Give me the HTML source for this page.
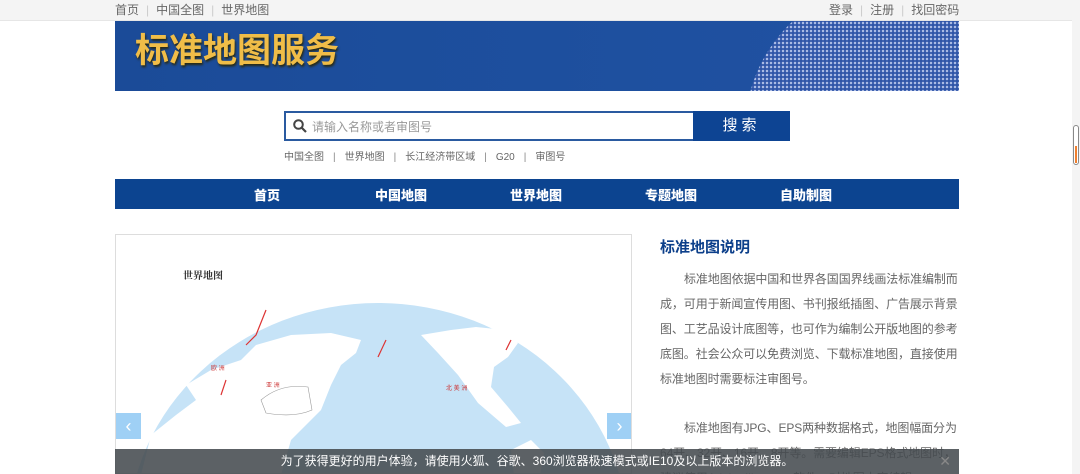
<!DOCTYPE html>
<html><head><meta charset="utf-8"><style>
*{margin:0;padding:0;box-sizing:border-box}
html,body{width:1080px;height:474px;overflow:hidden}
body{background:#fff;font-family:"Liberation Sans","Noto Sans CJK SC",sans-serif;position:relative}
.top{position:absolute;left:0;top:0;width:1072px;height:21px;background:#f4f4f4;border-bottom:1px solid #e6e6e6;font-size:12px;color:#666;line-height:21px}
.top .l{position:absolute;left:115px}
.top .r{position:absolute;left:829px}
.sep{color:#ccc;margin:0 7px}
.banner{position:absolute;left:115px;top:21px;width:844px;height:70px;background:linear-gradient(90deg,#1b4b98,#1d4f9e 50%,#2152a3);overflow:hidden}
.banner .t{position:absolute;left:20px;top:2px;font-size:34px;font-weight:bold;color:#f0bd48;text-shadow:1px 2px 2px #2a2a10}
.globe{position:absolute;left:630px;top:-40px;width:300px;height:300px;border-radius:50%;background:radial-gradient(circle,rgba(205,215,245,.8) 1px,transparent 1.5px) 0 0/4px 4px,#2f55a8}
.search{position:absolute;left:284px;top:111px;width:506px;height:30px;border:2px solid #2a5aa0;background:#fff}
.search .ph{position:absolute;left:26px;top:5px;font-size:12px;color:#999}
.search .btn{position:absolute;right:-2px;top:-2px;width:97px;height:30px;background:#0d4493;color:#fff;font-size:15px;text-align:center;line-height:30px;letter-spacing:4px}
.links{position:absolute;left:284px;top:148px;font-size:10px;color:#666}
.links span{margin:0 9px;color:#888}
.nav{position:absolute;left:115px;top:179px;width:844px;height:30px;background:#0c4490;color:#fff;font-size:13px;font-weight:bold}
.nav b{position:absolute;top:6px}
.car{position:absolute;left:115px;top:234px;width:517px;height:240px;border:1px solid #ddd;overflow:hidden;background:#fff}
.car .mt{position:absolute;left:67px;top:32px;font-size:10px;font-weight:bold;color:#333;font-family:"Liberation Serif","Noto Serif CJK SC",serif}
.arrow{position:absolute;top:178px;width:25px;height:26px;background:#9fd0f5;color:#fff;font-size:18px;text-align:center;line-height:26px}
.right{position:absolute;left:660px;top:236px;width:298px}
.right h2{font-size:15px;color:#0c3f8a;font-weight:bold;margin-bottom:10px}
.right p{font-size:12px;color:#666;line-height:25px;text-indent:24px;margin-bottom:24px;letter-spacing:-.1px}
.notice{position:absolute;left:115px;top:449px;width:844px;height:25px;background:rgba(70,75,80,.88);color:#fff;font-size:12px;line-height:25px;text-align:center}
.notice .x{position:absolute;right:8px;top:0;color:#888;font-size:14px}
.sb{position:absolute;left:1072px;top:0;width:8px;height:474px;background:#f4f4f4}
.sb i{position:absolute;left:1px;top:125px;width:6px;height:40px;border:1px solid #888;border-radius:3px;background:#fff}
.sb i:after{content:"";position:absolute;left:1px;top:20px;width:2px;height:17px;background:#f08030}
</style></head><body>
<div class="top"><span class="l">首页<span class="sep">|</span>中国全图<span class="sep">|</span>世界地图</span><span class="r">登录<span class="sep">|</span>注册<span class="sep">|</span>找回密码</span></div>
<div class="banner"><div class="globe"></div><div class="t">标准地图服务</div></div>
<div class="search">
<svg style="position:absolute;left:7px;top:6px" width="14" height="14" viewBox="0 0 14 14"><circle cx="5.5" cy="5.5" r="4.3" fill="none" stroke="#444" stroke-width="2"/><path d="M8.6 8.6L13 13" stroke="#444" stroke-width="2.2"/></svg>
<span class="ph">请输入名称或者审图号</span><div class="btn">搜索</div></div>
<div class="links">中国全图<span>|</span>世界地图<span>|</span>长江经济带区域<span>|</span>G20<span>|</span>审图号</div>
<div class="nav"><b style="left:139px">首页</b><b style="left:260px">中国地图</b><b style="left:395px">世界地图</b><b style="left:530px">专题地图</b><b style="left:665px">自助制图</b></div>
<div class="car">
<div class="mt">世界地图</div>
<svg style="position:absolute;left:0;top:0" width="517" height="240">
<ellipse cx="262" cy="300" rx="250" ry="232" fill="#c6e3f7"/>
<path d="M25 240 L35 200 L60 180 L80 165 L70 150 L95 135 L125 125 L140 110 L175 100 L215 98 L245 105 L240 118 L225 130 L215 150 L205 175 L190 190 L175 205 L165 240 Z" fill="#fff"/>
<path d="M105 110 L135 100 L150 92 L118 95 Z" fill="#fff"/>
<path d="M305 100 L335 95 L360 92 L390 95 L402 108 L392 122 L378 132 L375 152 L392 172 L405 188 L390 192 L362 168 L342 140 L322 118 Z" fill="#fff"/>
<path d="M395 215 L415 205 L428 218 L424 240 L398 240 Z" fill="#fff"/>
<path d="M145 165 Q165 148 192 152 L196 175 Q178 183 150 178 Z" fill="#fff" stroke="#999" stroke-width=".6"/>
<path d="M150 75 L140 100 L130 110 M110 145 L105 160 M270 105 L262 122 M395 105 L390 115" stroke="#d33" stroke-width="1.2" fill="none"/>
<text x="95" y="135" font-size="6" fill="#c33">欧  洲</text><text x="150" y="152" font-size="6" fill="#c33">亚  洲</text><text x="330" y="155" font-size="6" fill="#c33">北  美  洲</text>
</svg>
<div class="arrow" style="left:0">‹</div><div class="arrow" style="left:491px">›</div>
</div>
<div class="right"><h2>标准地图说明</h2>
<p>标准地图依据中国和世界各国国界线画法标准编制而成，可用于新闻宣传用图、书刊报纸插图、广告展示背景图、工艺品设计底图等，也可作为编制公开版地图的参考底图。社会公众可以免费浏览、下载标准地图，直接使用标准地图时需要标注审图号。</p>
<p>标准地图有JPG、EPS两种数据格式，地图幅面分为64开、32开、16开、8开等。需要编辑EPS格式地图时，建议使用Adobe Illustrator软件，对地图内容编辑</p></div>
<div class="notice">为了获得更好的用户体验，请使用火狐、谷歌、360浏览器极速模式或IE10及以上版本的浏览器。<span class="x">✕</span></div>
<div class="sb"><i></i></div>
</body></html>
